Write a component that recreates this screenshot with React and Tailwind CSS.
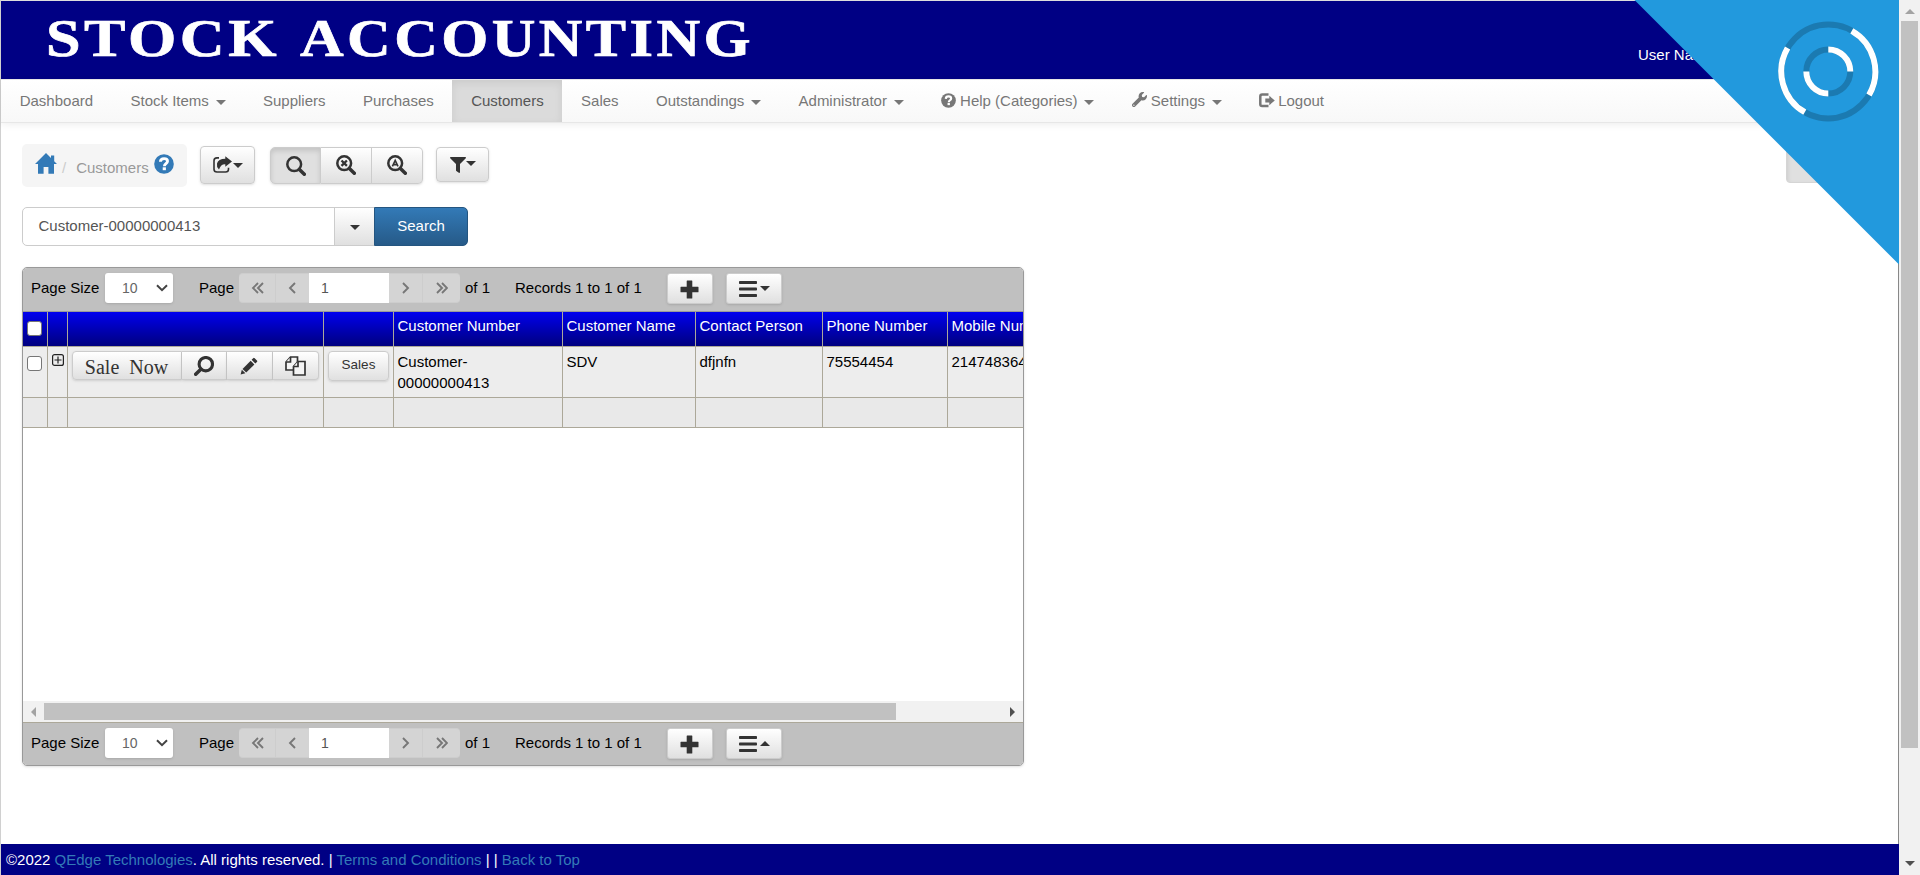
import React from "react";
import { FaWrench, FaFilter } from "react-icons/fa";

const btn =
  "flex items-center justify-center border border-[#ccc] bg-linear-to-b from-white to-[#e0e0e0] text-[#333]";

function Caret({ up = false, className = "" }) {
  return (
    <svg viewBox="0 0 10 5" className={"h-[5px] w-[10px] shrink-0 " + className} fill="currentColor">
      <path d={up ? "M0 5L5 0l5 5z" : "M0 0h10L5 5z"} />
    </svg>
  );
}

function QuestionSign({ className }) {
  return (
    <svg viewBox="0 0 20 20" className={className}>
      <circle cx="10" cy="10" r="9.8" fill="currentColor" />
      <path d="M6.4 7.8C6.5 5.4 8 4.6 10.1 4.6c2.200 0 3.400 1 3.400 2.600 0 2.500-3.100 2.400-3.100 5" fill="none" stroke="white" strokeWidth="2.900" />
      <path d="M8.700 13.300h3.200v2.900H8.700z" fill="white" />
    </svg>
  );
}

function LogOutIcon({ className }) {
  return (
    <svg viewBox="0 0 16 15" className={className}>
      <path d="M9.500 1.600H3.200Q1.300 1.600 1.300 3.400v7.800q0 1.800 1.900 1.800h6.300" fill="none" stroke="currentColor" strokeWidth="2.500" />
      <path d="M6.300 5.600h4V2.800l5.500 4.700-5.500 4.700V9.400h-4z" fill="currentColor" />
    </svg>
  );
}

function HomeIcon() {
  return (
    <svg viewBox="0 0 22 21" className="h-[21px] w-[22px] text-[#337ab7]" fill="currentColor">
      <path d="M11 0L16 5V2.500h3.200v5.700L22 11h-3v9.700h-5.600V14H8.600v6.700H3V11H0z" />
    </svg>
  );
}

function ShareIcon() {
  return (
    <svg viewBox="0 0 19 17" className="h-[17px] w-[19px]">
      <path d="M6 1.900H4Q1 1.900 1 4.700v8.600q0 2.700 3 2.700h8.500q3 0 3-2.700v-1.500" fill="none" stroke="currentColor" strokeWidth="1.600" />
      <path d="M12.300 0.200L19 5.500l-6.700 5.300V8.200Q8 7.800 6 13.500 3.200 10.500 4 7.500 5.200 2.900 12.300 2.800z" fill="currentColor" />
    </svg>
  );
}

function SearchIcon({ mark, bold }) {
  return (
    <svg viewBox="0 0 20 20" className="size-[20px]" fill="none" stroke="currentColor">
      <circle cx="8.200" cy="8.200" r={bold ? 6.700 : 6.900} strokeWidth={bold ? 3.100 : 2.500} />
      <path d="M13.400 13.400l4.900 4.900" strokeWidth="3.500" strokeLinecap="round" />
      {mark === "x" && <path d="M5.500 5.500l5.400 5.400M10.900 5.500l-5.400 5.400" strokeWidth="2.300" />}
      {mark === "a" && <path d="M5.400 11.400L8.200 5.300l2.800 6.100M6.300 9.600h3.800" strokeWidth="1.600" />}
    </svg>
  );
}

function PencilIcon() {
  return (
    <svg viewBox="0 0 18 18" className="size-[18px]" fill="currentColor">
      <path d="M13.200 1.200q.7-.7 1.500 0l2.200 2.200q.7.700 0 1.500l-1.600 1.600-3.700-3.700z" />
      <path d="M10.700 3.700l3.700 3.700-8.200 8.200-3.700-3.700z" />
      <path d="M1.800 12.700l3.600 3.600L.6 17.500z" />
    </svg>
  );
}

function PlusIcon() {
  return (
    <svg viewBox="0 0 19 19" className="size-[19px]" fill="currentColor">
      <path d="M7.200.5h4.600q.5 0 .5.500V6.700H18q.5 0 .5.500v4.600q0 .5-.5.500h-5.700V18q0 .5-.5.500H7.200q-.5 0-.5-.5v-5.700H1q-.5 0-.5-.5V7.200q0-.5.5-.5h5.700V1q0-.5.500-.5z" />
    </svg>
  );
}

function MenuIcon() {
  return (
    <svg viewBox="0 0 18 16" className="h-[16px] w-[18px]" fill="currentColor">
      <rect y="0" width="18" height="3" rx=".8" />
      <rect y="6.500" width="18" height="3" rx=".8" />
      <rect y="13" width="18" height="3" rx=".8" />
    </svg>
  );
}

function Chevrons({ double = false, left = false }) {
  const first = left ? "M7 1L2 6l5 5" : "M2 1l5 5-5 5";
  const second = left ? "M12 1L7 6l5 5" : "M7 1l5 5-5 5";
  return (
    <svg viewBox="0 0 13 12" className={double ? "h-[12px] w-[13px]" : "ml-1 h-[12px] w-[13px]"} fill="none" stroke="currentColor" strokeWidth="1.900">
      <path d={first} />
      {double && <path d={second} />}
    </svg>
  );
}

function NavItem({ children, active, caret }) {
  return (
    <div
      className={
        "flex h-full items-center px-[18.7px] pt-px text-[15px] " +
        (active ? "bg-[#dbdbdb] text-[#555] shadow-[inset_0_3px_9px_rgba(0,0,0,0.075)]" : "text-[#777]")
      }
    >
      {children}
      {caret && <Caret className="mt-[2px] ml-[6.8px]" />}
    </div>
  );
}

function Header() {
  return (
    <header className="flex h-[79px] justify-between border-t border-[#ddd] bg-[#000084]">
      <svg width="760" height="78" className="shrink-0" fill="white" stroke="white" strokeWidth="0.7" fontSize="53" fontWeight="bold" fontFamily="Liberation Serif, serif" letterSpacing="3">
        <text x="45" y="55" textLength="234" lengthAdjust="spacingAndGlyphs">STOCK</text>
        <text x="299" y="55" textLength="454" lengthAdjust="spacingAndGlyphs">ACCOUNTING</text>
      </svg>
      <div className="w-[261px] pt-[43px] text-[15px] leading-[21px] text-white">User Name</div>
    </header>
  );
}

function Nav() {
  return (
    <nav className="flex h-[44px] border-y border-[#e7e7e7] bg-linear-to-b from-white to-[#f8f8f8] shadow-[0_1px_8px_rgba(0,0,0,0.08)]">
      <NavItem>Dashboard</NavItem>
      <NavItem caret>Stock Items</NavItem>
      <NavItem>Suppliers</NavItem>
      <NavItem>Purchases</NavItem>
      <NavItem active>Customers</NavItem>
      <NavItem>Sales</NavItem>
      <NavItem caret>Outstandings</NavItem>
      <NavItem caret>Administrator</NavItem>
      <NavItem caret>
        <QuestionSign className="mr-1 mb-[3px] size-[15px]" />
        Help (Categories)
      </NavItem>
      <NavItem caret>
        <FaWrench className="mr-1 mb-[4px] size-[15px]" />
        Settings
      </NavItem>
      <NavItem>
        <LogOutIcon className="mr-[3px] mb-[3px] h-[15px] w-[16px]" />
        Logout
      </NavItem>
    </nav>
  );
}

function Toolbar() {
  return (
    <div className="flex h-[43px] items-start pl-[21px]">
      <div className="flex h-[43px] w-[165px] rounded-[5px] bg-[#f5f5f5] pl-[13px] text-[15px]">
        <div className="pt-[9px]"><HomeIcon /></div>
        <span className="ml-[5px] pt-[13px] text-[#ccc]">/</span>
        <span className="ml-[10px] pt-[13px] text-[#999]">Customers</span>
        <QuestionSign className="mt-[10px] ml-[5px] size-[20px] text-[#337ab7]" />
      </div>
      <button className={btn + " mt-[2px] ml-[13px] h-[38px] w-[55px] gap-px rounded-[4px] pb-[2px] shadow-sm"}>
        <ShareIcon />
        <Caret className="mt-[2px]" />
      </button>
      <div className="mt-[3px] ml-[15px] flex rounded-[5px] shadow-sm">
        <button className="flex h-[37px] w-[51px] items-center justify-center rounded-l-[5px] border border-[#ccc] bg-[#e0e0e0] text-[#333] shadow-[inset_0_3px_5px_rgba(0,0,0,0.125)]">
          <SearchIcon />
        </button>
        <button className={btn + " h-[37px] w-[51px] border-l-0 pb-[2px]"}>
          <SearchIcon mark="x" />
        </button>
        <button className={btn + " h-[37px] w-[51px] rounded-r-[5px] border-l-0 pb-[2px]"}>
          <SearchIcon mark="a" />
        </button>
      </div>
      <button className={btn + " mt-[3px] ml-[13px] h-[35px] w-[53px] rounded-[4px] shadow-sm"}>
        <FaFilter className="size-[16px]" />
        <Caret className="mb-[2px]" />
      </button>
      <div className="mt-[3px] mr-[62px] ml-auto h-[36px] w-[50px] rounded-[4px] border border-[#d5d5d5] bg-[#e0e0e0] shadow-[inset_0_3px_5px_rgba(0,0,0,0.125)]" />
    </div>
  );
}

function SearchRow() {
  return (
    <div className="flex pl-[21px] text-[15px]">
      <div className="flex h-[39px] w-[313px] items-center rounded-l-[5px] border border-[#ccc] pl-[15.5px] text-[#555]">Customer-00000000413</div>
      <button className={btn + " -ml-px h-[39px] w-[41px] pt-px"}>
        <Caret />
      </button>
      <button className="-ml-px h-[39px] w-[94px] rounded-r-[5px] border border-[#245580] bg-linear-to-b from-[#337ab7] to-[#265a88] text-white">Search</button>
    </div>
  );
}

function Pager({ up }) {
  const page = "flex h-[30px] items-center justify-center border-y border-[#cdcdcd] bg-[#d4d4d4] text-[#777]";
  return (
    <div className="flex text-[15px] text-black">
      <span className="w-[82px] pt-[4px] pl-[8px] leading-[21px]">Page Size</span>
      <div className="flex h-[30px] w-[68px] items-center rounded-[3px] bg-white pl-[17px] text-[14px] text-[#666] shadow-sm">
        10
        <svg viewBox="0 0 12 8" className="ml-[18px] h-[8px] w-[12px]" fill="none" stroke="#444" strokeWidth="2">
          <path d="M1 1.200l5 5 5-5" />
        </svg>
      </div>
      <span className="ml-[26px] w-[40px] pt-[4px] leading-[21px]">Page</span>
      <div className={page + " w-[37px] rounded-l-[4px] border-r"}><Chevrons double left /></div>
      <div className={page + " w-[33px]"}><Chevrons left /></div>
      <div className="flex h-[30px] w-[80px] items-center bg-white pl-[12px] text-[14px] text-[#555]">1</div>
      <div className={page + " w-[34px] border-r"}><Chevrons /></div>
      <div className={page + " w-[37px] rounded-r-[4px]"}><Chevrons double /></div>
      <span className="ml-[5px] pt-[4px] leading-[21px]">of 1</span>
      <span className="ml-[25px] w-[152px] pt-[4px] leading-[21px]">Records 1 to 1 of 1</span>
      <button className={btn + " h-[31px] w-[46px] rounded-[3px] pr-[2px] pt-[2px] shadow-sm"}><PlusIcon /></button>
      <button className={btn + " ml-[13px] h-[31px] w-[56px] gap-[3px] rounded-[3px] shadow-sm"}>
        <MenuIcon />
        <Caret up={up} />
      </button>
    </div>
  );
}

function Checkbox() {
  return <span className="block size-[15px] rounded-[3px] border border-[#767676] bg-white" />;
}

const cols = "grid w-[1101px] grid-cols-[25px_20px_256px_70px_169px_133px_127px_125px_176px]";

function Table() {
  const head = "border-r border-[#aca899] pt-[3px] pl-[3.5px] whitespace-nowrap";
  const cell = "border-r border-[#aca899] pt-[4px] pl-[3.5px]";
  return (
    <div className="h-[389px] overflow-hidden text-[15px] leading-[21px] text-black">
      <div className={cols + " h-[35px] border-b border-[#aca899] bg-linear-to-b from-[#0000ef] to-[#000080] text-white"}>
        <div className="border-r border-[#aca899] pt-[9px] pl-[4px]"><Checkbox /></div>
        <div className={head} />
        <div className={head} />
        <div className={head} />
        <div className={head}>Customer Number</div>
        <div className={head}>Customer Name</div>
        <div className={head}>Contact Person</div>
        <div className={head}>Phone Number</div>
        <div className={head}>Mobile Number</div>
      </div>
      <div className={cols + " h-[51px] border-b border-[#aca899] bg-[#ededed]"}>
        <div className="border-r border-[#aca899] pt-[9px] pl-[4px]"><Checkbox /></div>
        <div className="border-r border-[#aca899] pt-[7px] pl-[4px]">
          <svg viewBox="0 0 12 12" className="size-[12px]" fill="none" stroke="#222">
            <rect x=".6" y=".6" width="10.800" height="10.800" rx="2" strokeWidth="1.200" />
            <path d="M2.500 6h7M6 2.500v7" strokeWidth="1.200" />
          </svg>
        </div>
        <div className="flex items-start border-r border-[#aca899] pt-[4px] pl-[4px]">
          <button className={btn + " h-[29px] w-[110px] rounded-l-[4px] pt-[4px] pr-px font-['Liberation_Serif',serif] text-[20px] [word-spacing:5px] whitespace-nowrap shadow-sm"}>Sale Now</button>
          <button className={btn + " h-[29px] w-[45px] border-l-0 shadow-sm"}>
            <span className="-scale-x-100"><SearchIcon bold /></span>
          </button>
          <button className={btn + " h-[29px] w-[46px] border-l-0 pr-px shadow-sm"}><PencilIcon /></button>
          <button className={btn + " h-[29px] w-[46px] rounded-r-[4px] border-l-0 shadow-sm"}>
            <svg viewBox="0 0 21 20" className="h-[20px] w-[21px]" fill="#f4f4f4" stroke="currentColor" strokeWidth="1.700">
              <path d="M5.500 1h7v13H1V6z" />
              <path d="M5.500 1v5H1" />
              <path d="M13 5.500h7V19H8.500v-8.500z" />
              <path d="M13 5.500v5H8.500" />
            </svg>
          </button>
        </div>
        <div className="border-r border-[#aca899] pt-[4px] pl-[4px]">
          <button className={btn + " h-[30px] w-[61px] rounded-[4px] pb-[3px] text-[13.500px] shadow-sm"}>Sales</button>
        </div>
        <div className={cell}>Customer-<br />00000000413</div>
        <div className={cell}>SDV</div>
        <div className={cell}>dfjnfn</div>
        <div className={cell}>75554454</div>
        <div className={cell}>2147483647</div>
      </div>
      <div className={cols + " h-[30px] border-b border-[#aca899] bg-[#e9e9e9]"}>
        {[0, 1, 2, 3, 4, 5, 6, 7, 8].map((i) => (
          <div key={i} className="border-r border-[#aca899]" />
        ))}
      </div>
    </div>
  );
}

function GridPanel() {
  return (
    <section className="mt-[21px] ml-[21px] flex h-[499px] w-[1002px] flex-col overflow-hidden rounded-[5px] border border-[#999] shadow-sm">
      <div className="h-[44px] border-b border-[#999] bg-[#c0c0c0] pt-[5px]"><Pager /></div>
      <Table />
      <div className="flex h-[21px] items-center bg-[#f1f1f1] pl-[8px]">
        <svg viewBox="0 0 5 10" className="h-[10px] w-[5px]" fill="#a3a3a3"><path d="M5 0v10L0 5z" /></svg>
        <div className="ml-[8px] h-[17px] w-[852px] bg-[#c1c1c1]" />
        <svg viewBox="0 0 5 10" className="ml-[114px] h-[10px] w-[5px]" fill="#505050"><path d="M0 0v10l5-5z" /></svg>
      </div>
      <div className="h-[43px] border-t border-[#aca899] bg-[#c0c0c0] pt-[5px]"><Pager up /></div>
    </section>
  );
}

function Footer() {
  return (
    <footer className="mt-auto h-[31px] bg-[#000084] pt-[5px] pl-[5px] text-[15px] leading-[21px] text-white">
      ©2022 <span className="text-[#337ab7]">QEdge Technologies</span>. All rights reserved. |{" "}
      <span className="text-[#337ab7]">Terms and Conditions</span> | | <span className="text-[#337ab7]">Back to Top</span>
    </footer>
  );
}

function LoadingCorner() {
  return (
    <svg width="265" height="265" className="absolute top-0 left-[1634px]" fill="none" strokeWidth="6">
      <path d="M0.500 0H265v264.500z" fill="#2299dd" />
      <g stroke="#1b7ab1">
        <circle cx="194.300" cy="71.500" r="47" />
        <circle cx="194.300" cy="71.500" r="22" />
      </g>
      <g stroke="white" transform="translate(194.300 71.500)">
        <path d="M0 -22A22 22 0 0 1 22 0M0 22A22 22 0 0 1 -22 0" />
        <path transform="rotate(30)" d="M0 -47A47 47 0 0 1 47 0M0 47A47 47 0 0 1 -47 0" />
      </g>
    </svg>
  );
}

export default function App() {
  return (
    <div className="relative flex h-[875px] w-[1920px] overflow-hidden bg-white font-['Liberation_Sans',Arial,sans-serif]">
      <main className="flex w-[1899px] flex-col border-l border-[#d0d0d0]">
        <Header />
        <Nav />
        <div className="flex flex-1 flex-col border-r border-[#888] pt-[21px]">
          <Toolbar />
          <div className="h-5" />
          <SearchRow />
          <GridPanel />
        </div>
        <Footer />
      </main>
      <div className="flex w-[21px] flex-col items-center bg-[#f1f1f1]">
        <svg viewBox="0 0 10 5" className="mt-[9px] h-[5px] w-[10px]" fill="#a3a3a3"><path d="M0 5L5 0l5 5z" /></svg>
        <div className="mt-[7px] h-[727px] w-[17px] bg-[#c1c1c1]" />
        <svg viewBox="0 0 10 5" className="mt-[113px] h-[5px] w-[10px]" fill="#505050"><path d="M0 0h10L5 5z" /></svg>
      </div>
      <LoadingCorner />
    </div>
  );
}
